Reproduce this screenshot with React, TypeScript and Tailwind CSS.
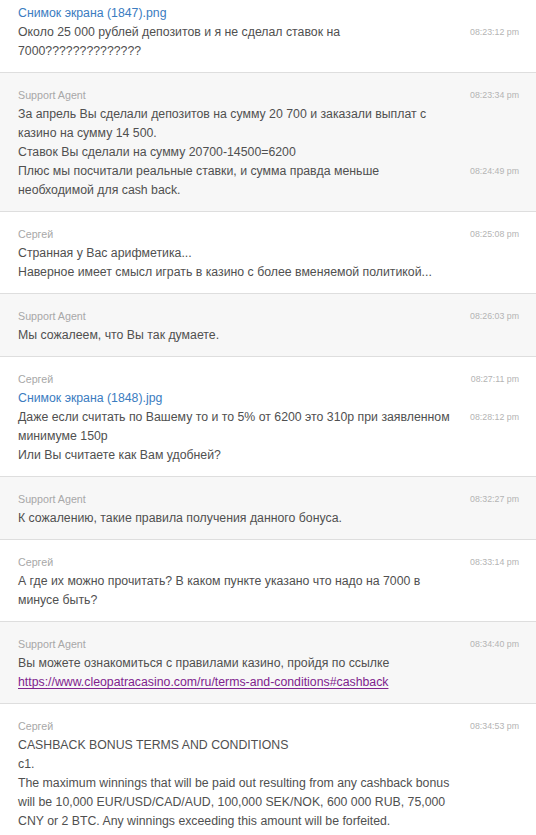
import React from "react";

type Line = string | { link: string; kind: "blue" | "purple" };
type Msg = { time: string | null; lines: Line[] };
type Group = { agent: boolean; name: string | null; msgs: Msg[]; top?: boolean };

const groups: Group[] = [
  {
    agent: false,
    name: null,
    top: true,
    msgs: [
      { time: null, lines: [{ link: "Снимок экрана (1847).png", kind: "blue" }] },
      {
        time: "08:23:12 pm",
        lines: ["Около 25 000 рублей депозитов и я не сделал ставок на", "7000??????????????"],
      },
    ],
  },
  {
    agent: true,
    name: "Support Agent",
    msgs: [
      {
        time: "08:23:34 pm",
        lines: [
          "За апрель Вы сделали депозитов на сумму 20 700 и заказали выплат с",
          "казино на сумму 14 500.",
          "Ставок Вы сделали на сумму 20700-14500=6200",
        ],
      },
      {
        time: "08:24:49 pm",
        lines: ["Плюс мы посчитали реальные ставки, и сумма правда меньше", "необходимой для cash back."],
      },
    ],
  },
  {
    agent: false,
    name: "Сергей",
    msgs: [
      {
        time: "08:25:08 pm",
        lines: [
          "Странная у Вас арифметика...",
          "Наверное имеет смысл играть в казино с более вменяемой политикой...",
        ],
      },
    ],
  },
  {
    agent: true,
    name: "Support Agent",
    msgs: [{ time: "08:26:03 pm", lines: ["Мы сожалеем, что Вы так думаете."] }],
  },
  {
    agent: false,
    name: "Сергей",
    msgs: [
      { time: "08:27:11 pm", lines: [{ link: "Снимок экрана (1848).jpg", kind: "blue" }] },
      {
        time: "08:28:12 pm",
        lines: [
          "Даже если считать по Вашему то и то 5% от 6200 это 310р при заявленном",
          "минимуме 150р",
          "Или Вы считаете как Вам удобней?",
        ],
      },
    ],
  },
  {
    agent: true,
    name: "Support Agent",
    msgs: [{ time: "08:32:27 pm", lines: ["К сожалению, такие правила получения данного бонуса."] }],
  },
  {
    agent: false,
    name: "Сергей",
    msgs: [
      {
        time: "08:33:14 pm",
        lines: ["А где их можно прочитать? В каком пункте указано что надо на 7000 в", "минусе быть?"],
      },
    ],
  },
  {
    agent: true,
    name: "Support Agent",
    msgs: [
      {
        time: "08:34:40 pm",
        lines: [
          "Вы можете ознакомиться с правилами казино, пройдя по ссылке",
          { link: "https://www.cleopatracasino.com/ru/terms-and-conditions#cashback", kind: "purple" },
        ],
      },
    ],
  },
  {
    agent: false,
    name: "Сергей",
    msgs: [
      {
        time: "08:34:53 pm",
        lines: [
          "CASHBACK BONUS TERMS AND CONDITIONS",
          "c1.",
          "The maximum winnings that will be paid out resulting from any cashback bonus",
          "will be 10,000 EUR/USD/CAD/AUD, 100,000 SEK/NOK, 600 000 RUB, 75,000",
          "CNY or 2 BTC. Any winnings exceeding this amount will be forfeited.",
        ],
      },
    ],
  },
];

function Time({ t }: { t: string | null }) {
  return (
    <div className="w-[60px] shrink-0 text-right text-[8.8px] text-[#b4b4b4] whitespace-nowrap">
      {t ?? ""}
    </div>
  );
}

function LineView({ line }: { line: Line }) {
  if (typeof line === "string") return <span>{line}</span>;
  if (line.kind === "blue") return <span className="text-[#3b7cbf] cursor-pointer">{line.link}</span>;
  return <span className="text-[#7f238e] underline underline-offset-[2px] cursor-pointer">{line.link}</span>;
}

export default function App() {
  return (
    <div
      className="h-screen w-full overflow-hidden bg-white"
      style={{ fontFamily: '"Liberation Sans", Arial, sans-serif' }}
    >
      {groups.map((g, gi) => (
        <div
          key={gi}
          className={`${g.agent ? "bg-[#f7f7f7]" : "bg-white"} border-b border-[#dedede] pl-[18px] pr-[17px] ${
            g.top ? "pt-[4px]" : "pt-[13px]"
          } pb-[11px]`}
        >
          {g.name && (
            <div className="flex items-center h-[19px]">
              <div className="flex-1 min-w-0 text-[10.7px] text-[#a8a8a8]">{g.name}</div>
              <Time t={g.msgs[0].time} />
            </div>
          )}
          {g.msgs.map((m, mi) =>
            m.lines.map((l, li) => (
              <div key={`${mi}-${li}`} className="flex items-center h-[19px]">
                <div className="flex-1 min-w-0 whitespace-nowrap text-[12.3px] text-[#505050]">
                  <LineView line={l} />
                </div>
                <Time t={li === 0 && !(mi === 0 && g.name) ? m.time : null} />
              </div>
            ))
          )}
        </div>
      ))}
    </div>
  );
}
